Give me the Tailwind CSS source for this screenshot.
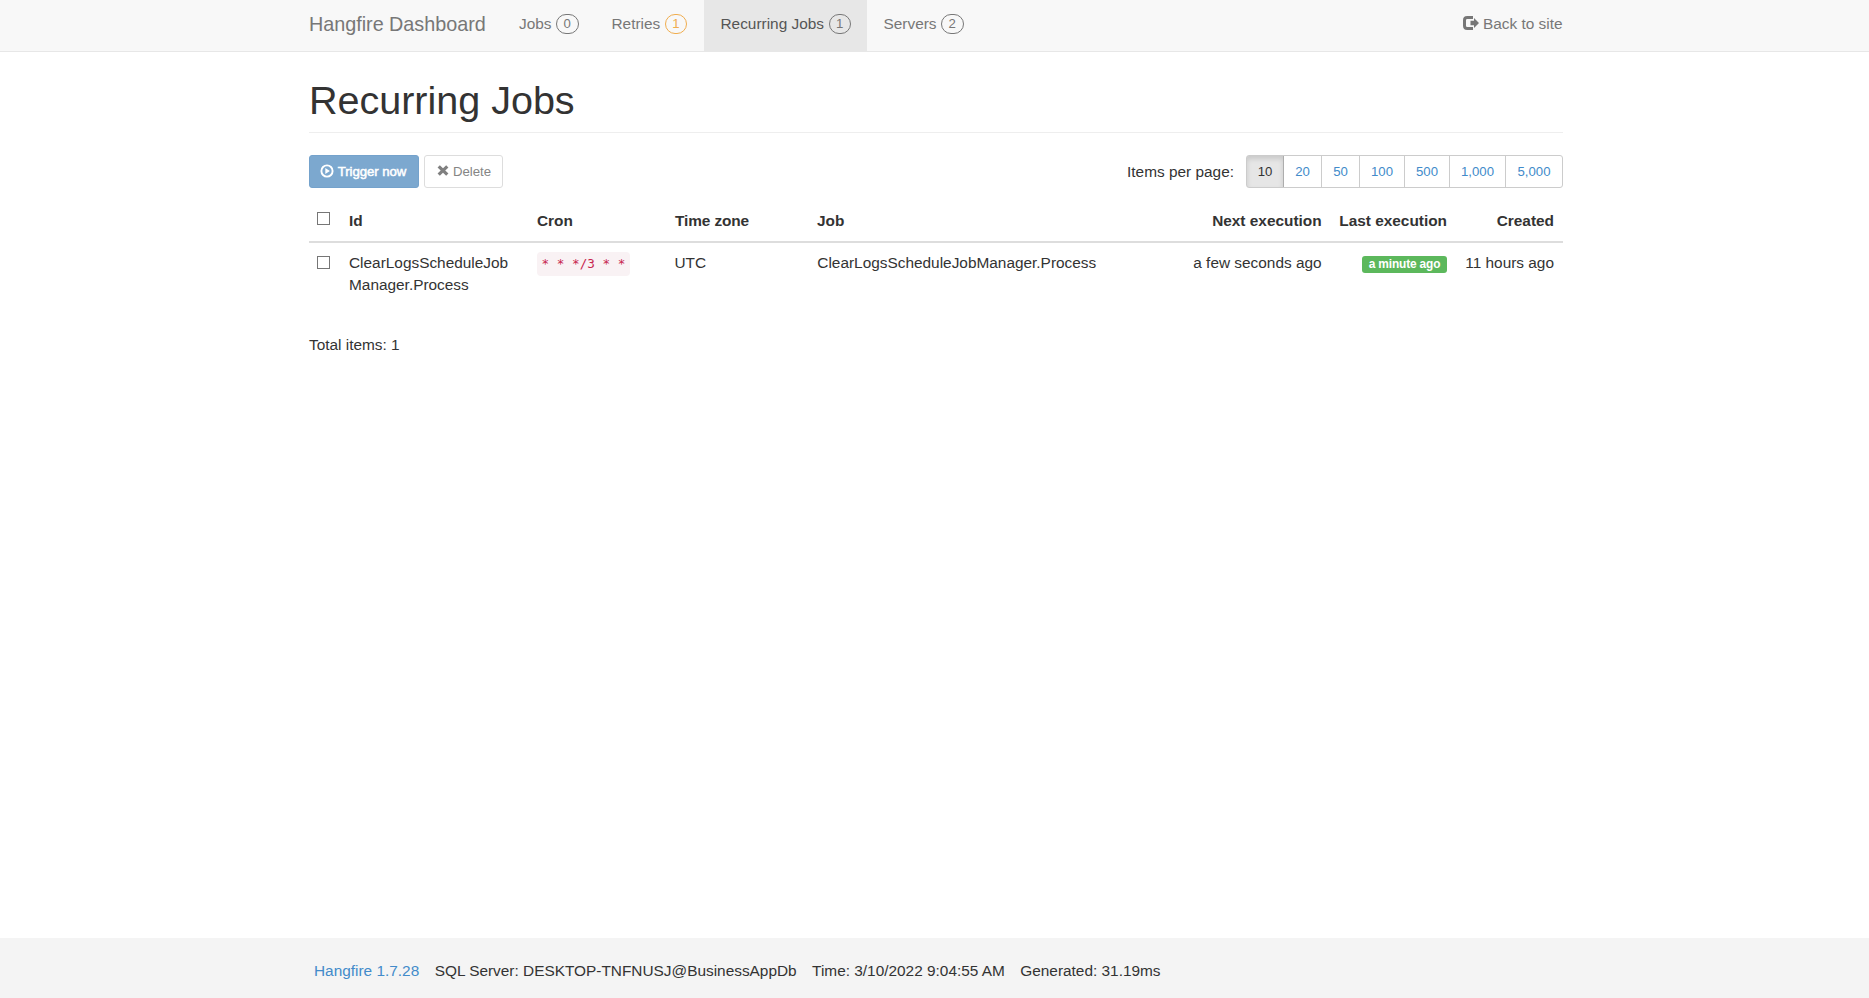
<!DOCTYPE html>
<html lang="en">
<head>
<meta charset="utf-8">
<title>Recurring Jobs – Hangfire Dashboard</title>
<script src="https://cdn.jsdelivr.net/npm/@tailwindcss/browser@4"></script>
</head>
<body class="flex h-[998px] flex-col overflow-hidden bg-white font-['Liberation_Sans',Arial,sans-serif] text-[15.4px] leading-[22px] text-[#333]">
<nav class="h-[52px] shrink-0 border-b border-[#e7e7e7] bg-[#f8f8f8] text-[#777]">
  <div class="ml-[309px] flex h-[51px] w-[1254px] items-start">
    <a class="w-[193px] pt-[13px] text-[19.8px] tracking-[-0.02px] whitespace-nowrap">Hangfire Dashboard</a>
    <a class="flex h-[51px] w-[93px] gap-[4.5px] pt-[13px] pl-[17px]">Jobs<span class="mt-px flex h-5 w-[22.5px] items-center justify-center rounded-[11px] border border-[#777] text-[13.2px] leading-none">0</span></a>
    <a class="flex h-[51px] w-[109px] gap-[4.5px] pt-[13px] pl-[16.5px]">Retries<span class="mt-px flex h-5 w-[22.5px] items-center justify-center rounded-[11px] border border-[#f0ad4e] text-[13.2px] leading-none text-[#f0ad4e]">1</span></a>
    <a class="flex h-[51px] w-[163px] gap-[4.5px] bg-[#e7e7e7] pt-[13px] pl-[16.5px] whitespace-nowrap text-[#555]">Recurring Jobs<span class="mt-px flex h-5 w-[22.5px] items-center justify-center rounded-[11px] border border-[#777] text-[13.2px] leading-none text-[#777]">1</span></a>
    <a class="flex h-[51px] gap-[4.5px] pt-[13px] pl-[16.5px]">Servers<span class="mt-px flex h-5 w-[22.5px] items-center justify-center rounded-[11px] border border-[#777] text-[13.2px] leading-none">2</span></a>
    <a class="mr-[0.5px] ml-auto flex gap-[4px] pt-[13px]">
      <svg class="mt-[3px] h-[14px] w-[16px]" viewBox="0 0 16 14"><path d="M10 1.500H4.200Q1.500 1.500 1.500 4.200v5.600q0 2.700 2.700 2.700H10" fill="none" stroke="#777" stroke-width="3"/><path d="M7.500 4.800H11V2L16 7l-5 5V9.200H7.500z" fill="#777"/></svg>
      <span>Back to site</span></a>
  </div>
</nav>
<main class="ml-[309px] w-[1254px] grow">
  <h1 class="mt-[27px] h-[54px] border-b border-[#eee] text-[39.6px] leading-[43.6px] tracking-[-0.04px]">Recurring Jobs</h1>
  <div class="mt-[22px] flex h-[33px] items-stretch text-[13.2px] leading-[31px]">
    <button class="flex w-[110px] items-center gap-[3.7px] rounded-[3px] border border-[#74a2cc] bg-[#7ca8cf] pl-[10px] whitespace-nowrap text-white">
      <svg class="-mt-[2px] size-[14px]" viewBox="0 0 14 14"><circle cx="7" cy="7" r="5.600" fill="none" stroke="#fff" stroke-width="1.900"/><path d="M5.300 4v6l4.600-3z" fill="#fff"/></svg>
      <span class="tracking-[-0.05px] [-webkit-text-stroke:0.5px_#fff]">Trigger now</span></button>
    <button class="ml-[5px] flex w-[79px] items-center gap-[4px] rounded-[3px] border border-[#ddd] pl-[12px] text-[#858585]">
      <svg class="-mt-[2px] h-[11px] w-[12px]" viewBox="0 0 12 11"><path d="M1.700 1.400l8.600 8.200M10.300 1.400L1.700 9.600" stroke="#808080" stroke-width="3.300" fill="none"/></svg>
      <span>Delete</span></button>
    <div class="mr-[12px] ml-auto pt-[6px] text-[15.4px] leading-[22px]">Items per page:</div>
    <div class="flex overflow-hidden rounded-[3px] border border-[#ccc] text-center text-[#428bca]">
      <a class="-my-px -ml-px w-[38px] rounded-l-[3px] border border-[#adadad] bg-[#e6e6e6] text-[#333] shadow-[inset_0_3px_5px_rgba(0,0,0,0.125)]">10</a>
      <a class="w-[38px] border-r border-[#ccc]">20</a>
      <a class="w-[38px] border-r border-[#ccc]">50</a>
      <a class="w-[45px] border-r border-[#ccc]">100</a>
      <a class="w-[45px] border-r border-[#ccc]">500</a>
      <a class="w-[56px] border-r border-[#ccc]">1,000</a>
      <a class="w-[56px]">5,000</a>
    </div>
  </div>
  <table class="mt-[13px] w-[1254px] table-fixed border-collapse">
    <colgroup><col class="w-[31px]"><col class="w-[188px]"><col class="w-[137px]"><col class="w-[143px]"><col class="w-[374px]"><col class="w-[148px]"><col class="w-[126px]"><col class="w-[107px]"></colgroup>
    <thead>
      <tr class="h-[42px] text-left align-top shadow-[inset_0_-2px_0_#ddd]">
        <th class="pt-[11px] pl-[8px]"><div class="size-[13px] border border-[#767676] bg-white"></div></th>
        <th class="pt-[9px] pl-[9px]">Id</th>
        <th class="pt-[9px] pl-[9px]">Cron</th>
        <th class="pt-[9px] pl-[10px] tracking-[-0.1px]">Time zone</th>
        <th class="pt-[9px] pl-[9px]">Job</th>
        <th class="pt-[9px] pr-[8.4px] text-right">Next execution</th>
        <th class="pt-[9px] pr-[9px] text-right">Last execution</th>
        <th class="pt-[9px] pr-[9px] text-right">Created</th>
      </tr>
    </thead>
    <tbody>
      <tr class="h-[62px] align-top">
        <td class="pt-[13px] pl-[8px]"><div class="size-[13px] border border-[#767676] bg-white"></div></td>
        <td class="pt-[9px] pl-[9px]">ClearLogsScheduleJob<br>Manager.Process</td>
        <td class="pt-[9px] pl-[9px]"><code class="flex h-6 w-[93px] items-center justify-center rounded-[4px] bg-[#f9f2f4] pb-px font-['DejaVu_Sans_Mono',monospace] text-[12.66px] whitespace-pre text-[#c7254e]">* * */3 * *</code></td>
        <td class="pt-[9px] pl-[9.5px]">UTC</td>
        <td class="pt-[9px] pl-[9.3px]">ClearLogsScheduleJobManager.Process</td>
        <td class="pt-[9px] pr-[8.4px] text-right">a few seconds ago</td>
        <td class="pt-[13px] pr-[9px]"><span class="ml-auto block h-[17px] w-[85px] rounded-[3px] bg-[#5cb85c] text-center text-[11.9px] leading-[16px] font-bold tracking-[-0.15px] whitespace-nowrap text-white">a minute ago</span></td>
        <td class="pt-[9px] pr-[9px] text-right">11 hours ago</td>
      </tr>
    </tbody>
  </table>
  <div class="mt-[29px]">Total items: 1</div>
</main>
<footer class="h-[60px] shrink-0 bg-[#f4f4f4]">
  <ul class="ml-[314px] flex gap-[15.400px] pt-[22px] whitespace-nowrap">
    <li class="text-[#428bca]">Hangfire 1.7.28</li>
    <li>SQL Server: DESKTOP-TNFNUSJ@BusinessAppDb</li>
    <li>Time: 3/10/2022 9:04:55 AM</li>
    <li>Generated: 31.19ms</li>
  </ul>
</footer>
</body>
</html>
